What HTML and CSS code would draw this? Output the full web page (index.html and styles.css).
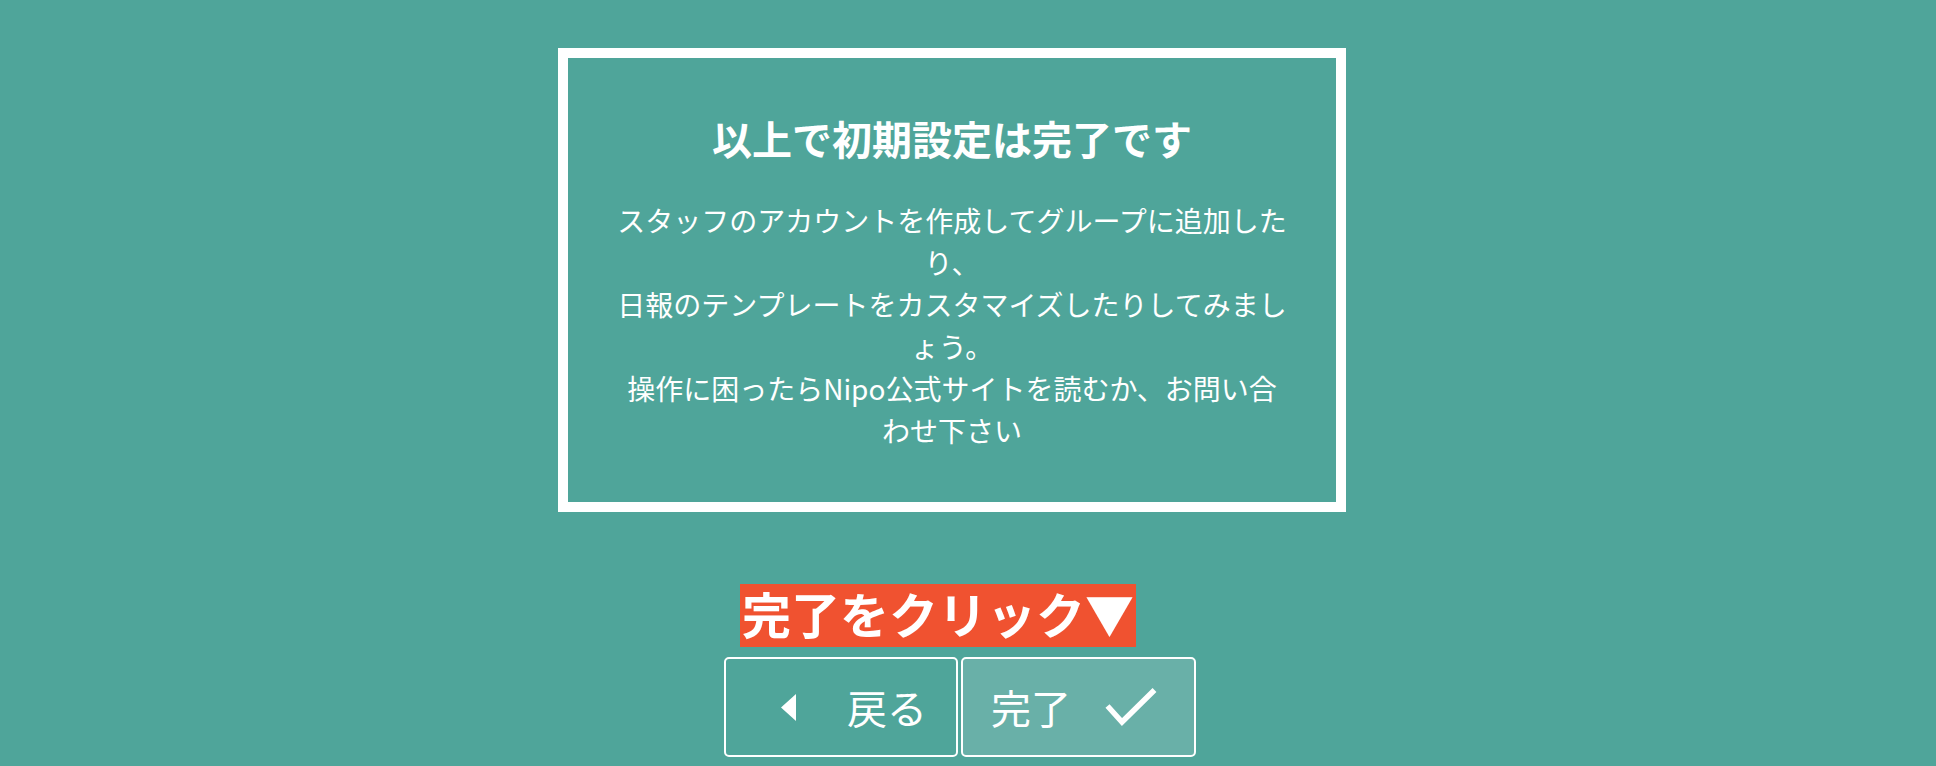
FILE: index.html
```html
<!DOCTYPE html>
<html lang="ja">
<head>
<meta charset="utf-8">
<title>初期設定完了</title>
<link rel="stylesheet" href="styles.css">
</head>
<body>
<main class="page">
  <section class="card">
    <h2 class="card-title">以上で初期設定は完了です</h2>
    <p class="card-text">スタッフのアカウントを作成してグループに追加したり、<br>日報のテンプレートをカスタマイズしたりしてみましょう。<br>操作に困ったらNipo公式サイトを読むか、お問い合わせ下さい</p>
  </section>
  <div class="callout-row">
    <span class="callout">完了をクリック▼</span>
  </div>
  <div class="buttons">
    <button class="btn btn-back" type="button">
      <svg class="caret" width="15" height="27" viewBox="0 0 15 27" aria-hidden="true"><polygon points="0,13.5 15,0 15,27" fill="#fff"/></svg>
      <span class="btn-label">戻る</span>
    </button>
    <button class="btn btn-done" type="button">
      <span class="btn-label">完了</span>
      <svg class="check" width="52" height="38" viewBox="0 0 52 38" aria-hidden="true"><polyline points="2.5,18 17,34 49.5,2" fill="none" stroke="#fff" stroke-width="5.5"/></svg>
    </button>
  </div>
</main>
</body>
</html>
```
FILE: styles.css
```css
html, body {
  margin: 0;
  padding: 0;
}
body {
  background: #4fa59a;
  color: #fff;
  font-family: "Noto Sans CJK JP", "Noto Sans", sans-serif;
  height: 766px;
  overflow: hidden;
}
.page {
  width: 1904px;
  padding-top: 48px;
}
.card {
  box-sizing: border-box;
  width: 788px;
  margin: 0 auto;
  border: 10px solid #fff;
  padding: 50px 47px 51px;
  text-align: center;
}
.card-title {
  margin: 0 0 31px;
  font-size: 40px;
  line-height: 60px;
  font-weight: 700;
}
.card-text {
  margin: 0;
  font-size: 28px;
  line-height: 42px;
  font-weight: 400;
}
.callout-row {
  margin-top: 72px;
  padding-left: 740px;
  height: 63px;
}
.callout {
  display: inline-block;
  background: #f05230;
  font-size: 49px;
  font-weight: 700;
  line-height: 57px;
  padding: 0 2px 6px;
  white-space: nowrap;
  vertical-align: top;
}
.buttons {
  margin-top: 10px;
  padding-left: 724px;
  display: flex;
  gap: 3px;
}
.btn {
  box-sizing: border-box;
  width: 234px;
  height: 100px;
  border: 2px solid #fff;
  border-radius: 5px;
  background: transparent;
  color: #fff;
  font-family: inherit;
  font-size: 40px;
  display: flex;
  align-items: center;
  margin: 0;
  cursor: pointer;
}
.btn-label {
  line-height: 1;
}
.btn-back {
  padding: 0 0 0 55px;
}
.btn-back .caret {
  margin-right: 51px;
}
.btn-done {
  width: 235px;
  padding: 0 0 0 28px;
  background: #69b0a8;
}
.btn-done .check {
  margin-left: 34px;
}
```
